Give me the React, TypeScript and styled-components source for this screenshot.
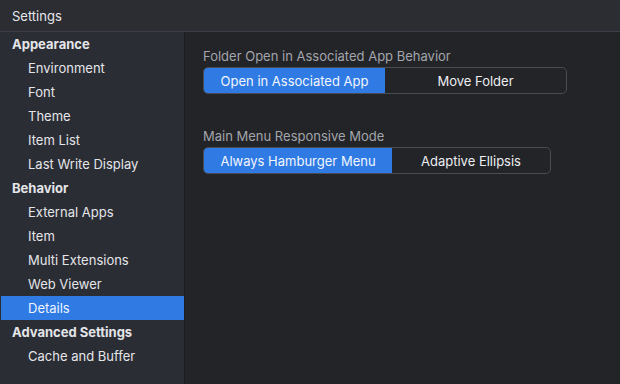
import React from 'react';
import styled, { createGlobalStyle } from 'styled-components';

const GlobalStyle = createGlobalStyle`
  html, body {
    margin: 0;
    padding: 0;
    background: #232428;
  }
  body {
    font-family: Inter, "Noto Sans", sans-serif;
    -webkit-font-smoothing: antialiased;
  }
`;

const Window = styled.div`
  width: 620px;
  height: 384px;
  display: flex;
  flex-direction: column;
  background: #232428;
  color: #e8e9ec;
  overflow: hidden;
`;

const TitleBar = styled.div`
  height: 31px;
  flex: none;
  display: flex;
  align-items: center;
  padding-left: 12px;
  background: #2b2d33;
  border-bottom: 1px solid #3b3e46;
  font-size: 13px;
  color: #e6e7ea;
`;

const Body = styled.div`
  flex: 1;
  display: flex;
  min-height: 0;
`;

const Sidebar = styled.nav`
  width: 184px;
  flex: none;
  background: #2b2d35;
  border-right: 1px solid #1d1e22;
  display: flex;
  flex-direction: column;
`;

const NavItem = styled.div<{ $header?: boolean; $active?: boolean }>`
  height: 24px;
  display: flex;
  align-items: center;
  font-size: 13px;
  font-weight: ${(p) => (p.$header ? 700 : 400)};
  color: ${(p) => (p.$active ? '#eef3ff' : '#e4e5e8')};
  background: ${(p) => (p.$active ? '#2f7be3' : 'transparent')};
  margin-left: ${(p) => (p.$active ? '1px' : '0')};
  padding-left: ${(p) => (p.$header ? '12px' : p.$active ? '27px' : '28px')};
`;

const Content = styled.main`
  flex: 1;
  padding: 16px 18px;
  display: flex;
  flex-direction: column;
  gap: 34px;
`;

const Field = styled.div`
  display: flex;
  flex-direction: column;
  gap: 2px;
`;

const Label = styled.div`
  font-size: 13px;
  color: #a2a5ab;
  height: 17px;
  line-height: 17px;
`;

const Segmented = styled.div`
  display: inline-flex;
  align-self: flex-start;
  height: 25px;
  border: 1px solid #4a4c53;
  border-radius: 5px;
  overflow: hidden;
`;

const Segment = styled.div<{ $selected?: boolean; $w: number }>`
  width: ${(p) => p.$w}px;
  display: flex;
  align-items: center;
  justify-content: center;
  font-size: 13px;
  font-weight: 400;
  color: ${(p) => (p.$selected ? '#f1f5ff' : '#eceef1')};
  background: ${(p) => (p.$selected ? '#2f7be3' : 'transparent')};
`;

const nav: { label: string; header?: boolean; active?: boolean }[] = [
  { label: 'Appearance', header: true },
  { label: 'Environment' },
  { label: 'Font' },
  { label: 'Theme' },
  { label: 'Item List' },
  { label: 'Last Write Display' },
  { label: 'Behavior', header: true },
  { label: 'External Apps' },
  { label: 'Item' },
  { label: 'Multi Extensions' },
  { label: 'Web Viewer' },
  { label: 'Details', active: true },
  { label: 'Advanced Settings', header: true },
  { label: 'Cache and Buffer' },
];

const fields = [
  {
    label: 'Folder Open in Associated App Behavior',
    options: [
      { text: 'Open in Associated App', width: 181 },
      { text: 'Move Folder', width: 181 },
    ],
  },
  {
    label: 'Main Menu Responsive Mode',
    options: [
      { text: 'Always Hamburger Menu', width: 188 },
      { text: 'Adaptive Ellipsis', width: 158 },
    ],
  },
];

export default function App() {
  return (
    <>
      <GlobalStyle />
      <Window>
        <TitleBar>Settings</TitleBar>
        <Body>
          <Sidebar>
            {nav.map((item) => (
              <NavItem key={item.label} $header={item.header} $active={item.active}>
                {item.label}
              </NavItem>
            ))}
          </Sidebar>
          <Content>
            {fields.map((f) => (
              <Field key={f.label}>
                <Label>{f.label}</Label>
                <Segmented>
                  {f.options.map((o, i) => (
                    <Segment key={o.text} $selected={i === 0} $w={o.width}>
                      {o.text}
                    </Segment>
                  ))}
                </Segmented>
              </Field>
            ))}
          </Content>
        </Body>
      </Window>
    </>
  );
}
